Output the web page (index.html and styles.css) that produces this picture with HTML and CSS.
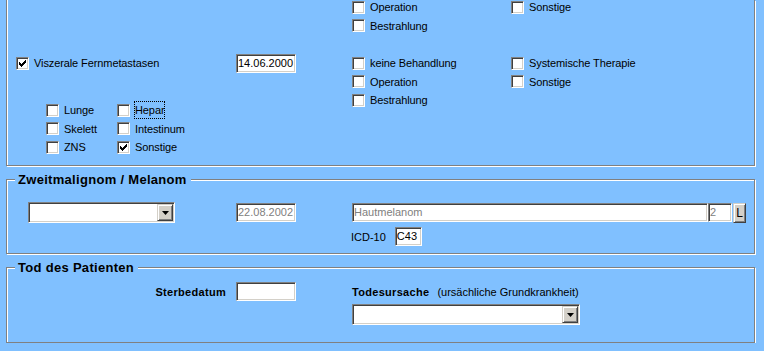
FILE: index.html
```html
<!DOCTYPE html>
<html>
    <head>
        <title>Metastasen / Tod</title>
        <meta charset="UTF-8">
        <link rel="stylesheet" href="styles.css">
    </head>
    <body>
        <div id="main">

            <fieldset class="box cont">
                <div class="meta first">
                    <div class="lft"></div>
                    <div class="dt"></div>
                    <div class="treat">
                        <label class="chk"><span class="cb"></span>Operation</label>
                        <label class="chk"><span class="cb"></span>Sonstige</label>
                        <label class="chk"><span class="cb"></span>Bestrahlung</label>
                    </div>
                </div>

                <div class="meta second">
                    <div class="lft">
                        <label class="chk"><span class="cb"><svg class="tick" width="11" height="11" viewBox="0 0 11 11"><path d="M2 4h1v3h-1zM3 5h1v3h-1zM4 6h1v3h-1zM5 5h1v3h-1zM6 4h1v3h-1zM7 3h1v3h-1zM8 2h1v3h-1z"/></svg></span>Viszerale Fernmetastasen</label>
                        <div class="organs">
                            <label class="chk"><span class="cb"></span>Lunge</label>
                            <label class="chk"><span class="cb"></span><span class="focus">Hepar</span></label>
                            <label class="chk"><span class="cb"></span>Skelett</label>
                            <label class="chk"><span class="cb"></span>Intestinum</label>
                            <label class="chk"><span class="cb"></span>ZNS</label>
                            <label class="chk"><span class="cb"><svg class="tick" width="11" height="11" viewBox="0 0 11 11"><path d="M2 4h1v3h-1zM3 5h1v3h-1zM4 6h1v3h-1zM5 5h1v3h-1zM6 4h1v3h-1zM7 3h1v3h-1zM8 2h1v3h-1z"/></svg></span>Sonstige</label>
                        </div>
                    </div>
                    <div class="dt"><div class="field date">14.06.2000</div></div>
                    <div class="treat">
                        <label class="chk"><span class="cb"></span>keine Behandlung</label>
                        <label class="chk"><span class="cb"></span>Systemische Therapie</label>
                        <label class="chk"><span class="cb"></span>Operation</label>
                        <label class="chk"><span class="cb"></span>Sonstige</label>
                        <label class="chk"><span class="cb"></span>Bestrahlung</label>
                    </div>
                </div>
            </fieldset>

            <fieldset class="box">
                <legend>Zweitmalignom / Melanom</legend>
                <div class="zweit">
                    <div class="lft">
                        <div class="combo small"><span class="drop"><svg width="7" height="4" viewBox="0 0 7 4"><path d="M0 0h7l-3.5 4z"/></svg></span></div>
                    </div>
                    <div class="dt"><div class="field date off">22.08.2002</div></div>
                    <div class="diag">
                        <div class="field wide off">Hautmelanom</div>
                        <div class="field num off">2</div>
                        <div class="btn">L</div>
                    </div>
                    <div class="icd">
                        <span>ICD-10</span>
                        <div class="field code">C43</div>
                    </div>
                </div>
            </fieldset>

            <fieldset class="box">
                <legend>Tod des Patienten</legend>
                <div class="tod">
                    <div class="lft lbl">Sterbedatum</div>
                    <div class="dt"><div class="field date"></div></div>
                    <div class="ursache">
                        <div class="ulbl"><b>Todesursache</b><span>(ursächliche Grundkrankheit)</span></div>
                        <div class="combo big"><span class="drop"><svg width="7" height="4" viewBox="0 0 7 4"><path d="M0 0h7l-3.5 4z"/></svg></span></div>
                    </div>
                </div>
            </fieldset>

        </div>
    </body>
</html>
```

FILE: styles.css
```css
body {
    margin: 0;
    background-color: #80c0ff;
    font-family: "Liberation Sans", Arial, sans-serif;
    font-size: 11px;
    color: #000;
}

#main {
    width: 764px;
}

/* fieldsets, groove look */
.box {
    box-sizing: border-box;
    width: 749px;
    margin: 6px 0 0 6px;
    padding: 0;
    border: 1px solid #808080;
    box-shadow: inset 1px 1px 0 #fff, 1px 1px 0 #fff;
    min-width: 0;
}

.box.cont {
    margin-top: 0;
    border-top: none;
    padding-bottom: 8.5px;
    box-shadow: inset 1px 0 0 #fff, 1px 1px 0 #fff;
}

.box legend {
    margin-left: 8px;
    padding: 0 4px 0 3px;
    height: 15px;
    line-height: 15px;
    font-size: 13px;
    font-weight: bold;
    letter-spacing: 0.3px;
    background-color: #80c0ff;
}

/* metastasis rows */
.meta {
    display: grid;
    grid-template-columns: 229px 116px 1fr;
    align-items: start;
}

.meta.first {
    margin-top: -2px;
}

.meta.second {
    margin-top: 19px;
}

.lft {
    padding-left: 9px;
}

.treat {
    display: grid;
    grid-template-columns: 159px 1fr;
    grid-auto-rows: 18.5px;
}

.organs {
    display: grid;
    grid-template-columns: 71px 1fr;
    grid-auto-rows: 18.5px;
    margin: 28.5px 0 0 30px;
}

.chk {
    display: flex;
    align-items: center;
    height: 18.5px;
    white-space: nowrap;
    letter-spacing: -0.1px;
}

.cb {
    display: block;
    box-sizing: border-box;
    width: 13px;
    height: 13px;
    margin-right: 5px;
    background: #fff;
    border: 1px solid;
    border-color: #808080 #fff #fff #808080;
    box-shadow: inset 1px 1px 0 #404040, inset -1px -1px 0 #d4d0c8;
    flex: none;
}

.tick {
    display: block;
    shape-rendering: crispEdges;
}

.focus {
    outline: 1px dotted #000;
    line-height: 16px;
}

/* inputs */
.field {
    box-sizing: border-box;
    height: 19px;
    line-height: 17px;
    padding: 0 0 0 1px;
    background: #fff;
    border: 1px solid;
    border-color: #808080 #fff #fff #808080;
    box-shadow: inset 1px 1px 0 #404040, inset -1px -1px 0 #d4d0c8;
    white-space: nowrap;
    overflow: hidden;
}

.field.off {
    color: #808080;
}

.date {
    width: 60px;
}

.wide {
    width: 356px;
}

.num {
    width: 24px;
}

.code {
    width: 27px;
}

.combo {
    box-sizing: border-box;
    display: flex;
    justify-content: flex-end;
    height: 21px;
    padding: 1px;
    background: #fff;
    border: 1px solid;
    border-color: #808080 #fff #fff #808080;
    box-shadow: inset 1px 1px 0 #404040, inset -1px -1px 0 #d4d0c8;
}

.combo.small {
    width: 147px;
}

.combo.big {
    width: 228px;
}

.drop, .btn {
    box-sizing: border-box;
    display: flex;
    align-items: center;
    justify-content: center;
    background: #d4d0c8;
    border: 1px solid;
    border-color: #d4d0c8 #404040 #404040 #d4d0c8;
    box-shadow: inset 1px 1px 0 #fff, inset -1px -1px 0 #808080;
}

.drop {
    width: 16px;
    height: 17px;
}

.btn {
    width: 13px;
    height: 20px;
    margin-left: 1px;
    font-size: 12px;
}

/* zweitmalignom */
.zweit {
    display: grid;
    grid-template-columns: 229px 116px 1fr;
    grid-template-rows: 21px 19px;
    row-gap: 4px;
    align-items: center;
    padding: 15px 0 7px;
}

.zweit .lft {
    padding-left: 21px;
}

.diag {
    display: flex;
    align-items: center;
}

.icd {
    grid-column: 3;
    display: flex;
    align-items: center;
    margin-left: -1px;
}

.icd span {
    margin-right: 9px;
}

/* tod */
.tod {
    display: grid;
    grid-template-columns: 229px 116px 1fr;
    align-items: start;
    padding: 7px 0 17px;
}

.lbl {
    height: 20px;
    line-height: 20px;
    text-align: right;
    padding-right: 10px;
    font-weight: bold;
    letter-spacing: 0.3px;
}

.ulbl {
    height: 20px;
    line-height: 20px;
    margin-bottom: 2px;
    white-space: nowrap;
}

.ulbl b {
    letter-spacing: 0.3px;
}

.ulbl span {
    margin-left: 8px;
}
```
